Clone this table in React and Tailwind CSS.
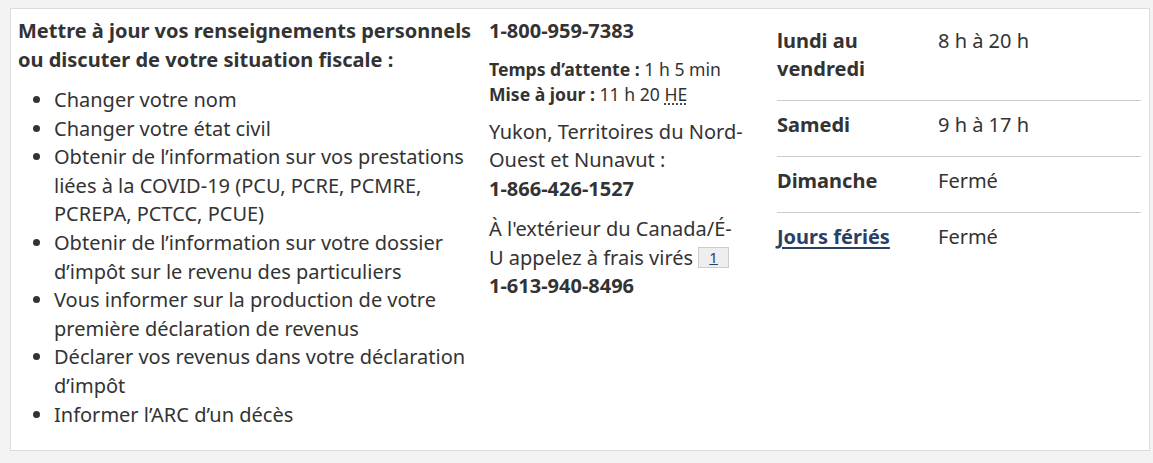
const topics = [
    'Changer votre nom',
    'Changer votre état civil',
    'Obtenir de l’information sur vos prestations liées à la COVID-19 (PCU, PCRE, PCMRE, PCREPA, PCTCC, PCUE)',
    'Obtenir de l’information sur votre dossier d’impôt sur le revenu des particuliers',
    'Vous informer sur la production de votre première déclaration de revenus',
    'Déclarer vos revenus dans votre déclaration d’impôt',
    'Informer l’ARC d’un décès',
];

const hours = [
    { day: 'lundi au vendredi', time: '8 h à 20 h' },
    { day: 'Samedi', time: '9 h à 17 h' },
    { day: 'Dimanche', time: 'Fermé' },
    { day: 'Jours fériés', time: 'Fermé', link: true },
];

export default function App() {
    return (
        <div className="min-h-[463px] bg-[#f3f3f3] pt-[8px] pr-[3px] pl-[10px] font-['Noto_Sans',sans-serif] text-[20px] leading-[28.5px] text-[#333]">
            <div className="flex border border-[#dcdcdc] bg-white">
                <div className="w-[471px] shrink-0 px-[7px] pt-[8px] pb-[9px]">
                    <p className="mb-[12px] font-bold">
                        Mettre à jour vos renseignements personnels ou discuter de votre situation fiscale :
                    </p>
                    <ul className="mb-[12px] list-disc pl-[36px] leading-[28.6px]">
                        {topics.map((item) => (
                            <li key={item}>{item}</li>
                        ))}
                    </ul>
                </div>

                <div className="w-[288px] shrink-0 pt-[8px] pr-[24px] pl-[7px]">
                    <p className="mb-[11px] font-bold">1-800-959-7383</p>
                    <p className="mb-[11px] text-[17.6px] leading-[25px]">
                        <strong>Temps d’attente :</strong> 1 h 5 min
                        <br />
                        <strong>Mise à jour :</strong> 11 h 20{' '}
                        <abbr title="heure de l'Est" className="underline decoration-dotted underline-offset-[3px]">
                            HE
                        </abbr>
                    </p>
                    <p className="mb-[12px]">
                        Yukon, Territoires du Nord-Ouest et Nunavut :
                        <br />
                        <strong>1-866-426-1527</strong>
                    </p>
                    <p>
                        À l'extérieur du Canada/É-U appelez à frais virés{' '}
                        <sup className="relative top-[-2px] inline-block border border-[#ccc] bg-[#eee] px-[10px] align-middle text-[15px] leading-[19px]">
                            <a href="#fn1" className="text-[#284162] underline">
                                1
                            </a>
                        </sup>
                        <br />
                        <strong>1-613-940-8496</strong>
                    </p>
                </div>

                <div className="min-w-0 flex-1 pt-[8px] pr-[8px] pl-[7px]">
                    <table className="w-full border-collapse leading-[28px]">
                        <tbody>
                            {hours.map((row, i) => (
                                <tr
                                    key={row.day}
                                    className={i < hours.length - 1 ? 'border-b border-[#ccc]' : ''}
                                >
                                    <th className="w-[161px] pt-[10px] pr-[8px] pb-[17px] text-left align-top font-bold">
                                        {row.link ? (
                                            <a href="#feries" className="text-[#284162] underline underline-offset-[3px]">
                                                {row.day}
                                            </a>
                                        ) : (
                                            row.day
                                        )}
                                    </th>
                                    <td className="pt-[10px] pb-[17px] align-top">{row.time}</td>
                                </tr>
                            ))}
                        </tbody>
                    </table>
                </div>
            </div>
        </div>
    );
}
